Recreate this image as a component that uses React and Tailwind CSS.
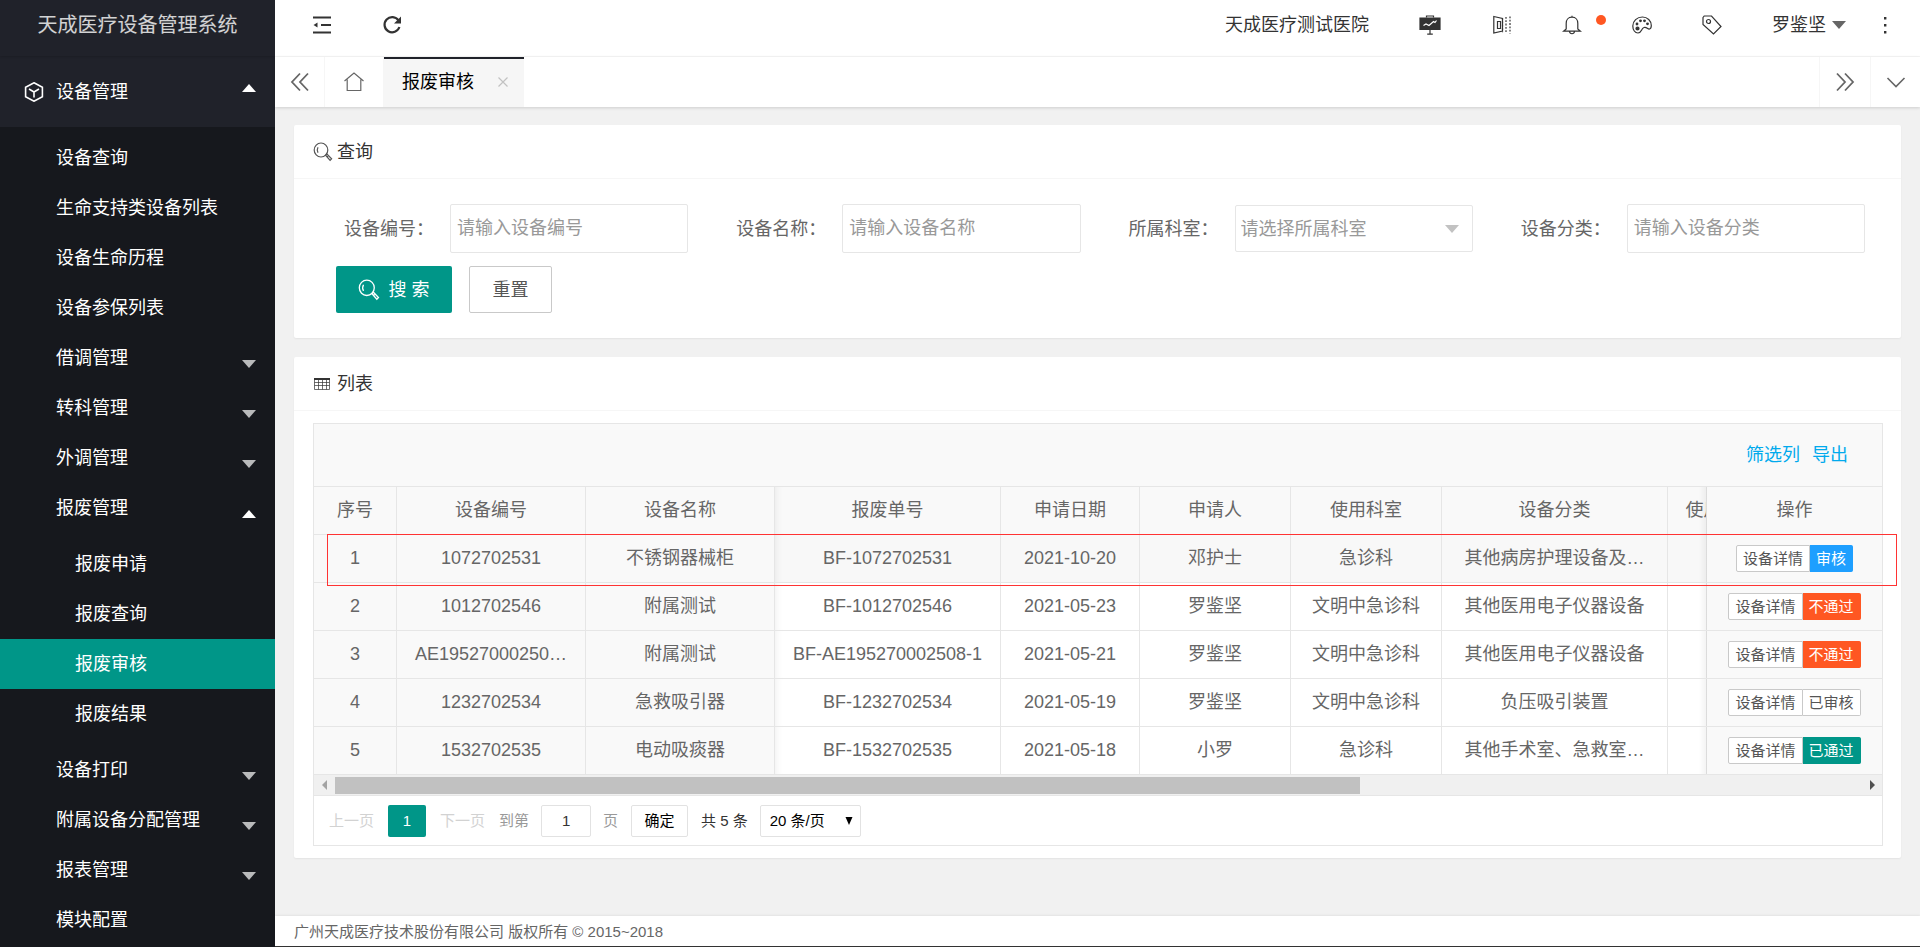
import React, { useState } from "react";

const menu = [
  { name: "设备查询" },
  { name: "生命支持类设备列表" },
  { name: "设备生命历程" },
  { name: "设备参保列表" },
  { name: "借调管理", more: true },
  { name: "转科管理", more: true },
  { name: "外调管理", more: true },
  {
    name: "报废管理",
    more: true,
    children: ["报废申请", "报废查询", "报废审核", "报废结果"],
  },
  { name: "设备打印", more: true },
  { name: "附属设备分配管理", more: true },
  { name: "报表管理", more: true },
  { name: "模块配置" },
];

const columns = [
  { title: "序号", width: "w-[83px]" },
  { title: "设备编号", width: "w-[189px]" },
  { title: "设备名称", width: "w-[189px]" },
  { title: "报废单号", width: "w-[226px]" },
  { title: "申请日期", width: "w-[139px]" },
  { title: "申请人", width: "w-[151px]" },
  { title: "使用科室", width: "w-[151px]" },
  { title: "设备分类", width: "w-[226px]" },
  { title: "使用状态", width: "w-[108px]" },
];

const rows = [
  {
    cells: ["1", "1072702531", "不锈钢器械柜", "BF-1072702531", "2021-10-20", "邓护士", "急诊科", "其他病房护理设备及…", ""],
    action: "审核",
    color: "border-[#1e9fff] bg-[#1e9fff] text-white",
  },
  {
    cells: ["2", "1012702546", "附属测试", "BF-1012702546", "2021-05-23", "罗鉴坚", "文明中急诊科", "其他医用电子仪器设备", ""],
    action: "不通过",
    color: "border-[#ff5722] bg-[#ff5722] text-white",
  },
  {
    cells: ["3", "AE19527000250…", "附属测试", "BF-AE195270002508-1", "2021-05-21", "罗鉴坚", "文明中急诊科", "其他医用电子仪器设备", ""],
    action: "不通过",
    color: "border-[#ff5722] bg-[#ff5722] text-white",
  },
  {
    cells: ["4", "1232702534", "急救吸引器", "BF-1232702534", "2021-05-19", "罗鉴坚", "文明中急诊科", "负压吸引装置", ""],
    action: "已审核",
    color: "border-[#c9c9c9] bg-white text-[#555]",
  },
  {
    cells: ["5", "1532702535", "电动吸痰器", "BF-1532702535", "2021-05-18", "小罗", "急诊科", "其他手术室、急救室…", ""],
    action: "已通过",
    color: "border-[#009688] bg-[#009688] text-white",
  },
];

const Icon = ({ children, className = "size-5", viewBox = "0 0 20 20" }) => (
  <svg
    viewBox={viewBox}
    className={className}
    fill="none"
    stroke="currentColor"
    strokeWidth="1.2"
    aria-hidden="true"
  >
    {children}
  </svg>
);

const Caret = ({ up, className = "" }) => (
  <svg viewBox="0 0 14 8" className={`h-2 w-3.5 ${className}`} fill="currentColor" aria-hidden="true">
    <path d={up ? "M7 0l7 8H0z" : "M0 0h14L7 8z"} />
  </svg>
);

const SearchIcon = ({ className }) => (
  <Icon className={className}>
    <ellipse cx="8" cy="8" rx="6.8" ry="7" />
    <path d="M5 5.2C4 7 4 9 5 10.8M12.6 13.2l1.4-1.2 4.6 4.8-1.5 1.6zM14 15l1-.9" />
  </Icon>
);

const Sidebar = () => (
  <aside className="w-[275px] shrink-0 overflow-hidden bg-[#16181d] text-white">
    <div className="bg-[#20222a]">
      <div className="flex h-14 items-center justify-center pb-1.5 text-xl text-white/80 shadow-[0_1px_2px_rgba(0,0,0,0.15)]">
        天成医疗设备管理系统
      </div>
      <a href="#" className="flex h-[71px] items-center pr-[19px] pl-6 text-lg">
        <Icon className="mr-3 size-5">
          <path strokeWidth="1.6" d="M10 .8l8.4 4.4v9.6L10 19.2l-8.4-4.4V5.2zM5 7l5 3 5-3M10 10v5.5" />
        </Icon>
        <span className="grow">设备管理</span>
        <Caret up className="mb-2" />
      </a>
    </div>
    <nav className="pt-1.5 text-lg">
      {menu.map((item) => (
        <div key={item.name}>
          <a href="#" className="flex h-[50px] items-center pr-[19px] pl-14">
            <span className="grow">{item.name}</span>
            {item.more && (
              <Caret
                up={Boolean(item.children)}
                className={item.children ? "mt-3" : "mt-3 text-white/70"}
              />
            )}
          </a>
          {item.children && (
            <div className="py-1.5">
              {item.children.map((child) => (
                <a
                  key={child}
                  href="#"
                  className={`flex h-[50px] items-center pl-[75px] ${
                    child === "报废审核" ? "bg-[#009688]" : ""
                  }`}
                >
                  {child}
                </a>
              ))}
            </div>
          )}
        </div>
      ))}
    </nav>
  </aside>
);

const Header = () => (
  <header className="flex h-[57px] items-center border-b border-[#f6f6f6] bg-white pb-1.5 text-[#333]">
    <button aria-label="收起菜单" className="ml-[37px]">
      <Icon>
        <path strokeWidth="2" d="M1 2.5h18M9 10h10M1 17.5h18" />
        <path d="M1.5 10L5.5 7.5v5z" fill="currentColor" stroke="none" />
      </Icon>
    </button>
    <button aria-label="刷新" className="ml-[50px]">
      <Icon>
        <path strokeWidth="2.2" d="M16.5 5.5A7.6 7.6 0 1 0 17.4 12" />
        <path d="M19 1.5v7h-7z" fill="currentColor" stroke="none" />
      </Icon>
    </button>
    <span className="grow text-right text-lg">天成医疗测试医院</span>
    <button aria-label="工作台" className="ml-[50px]">
      <Icon className="size-[22px]" viewBox="0 0 22 22">
        <path d="M7.5 3.5V2h7v1.5M11 16v4.5M8.2 20.2h5.6" />
        <path d="M1 4h20v11.5H1z" fill="currentColor" />
        <path stroke="#fff" d="M4.5 11.5l2.5-1.5 3 1.5 4.5-4 1.5 1 1.5-2" />
      </Icon>
    </button>
    <button aria-label="便签" className="ml-[51px]">
      <Icon>
        <path d="M1.8 1.5l8.7 2v12.500l-8.7 2zM5.5 6.5h3v7h-3z" />
        <path strokeDasharray="1.8 1.5" d="M10.5 3.2v14M14 2v16M18 1.5v17" />
      </Icon>
    </button>
    <button aria-label="消息" className="relative ml-[50px]">
      <Icon>
        <path d="M10 2.2c-4 0-5.8 3-5.8 6V14L1.5 16.2h17L15.8 14V8.2c0-3-1.8-6-5.8-6zM10 .8v1.4M7.5 16.5c.4 3 4.6 3 5 0" />
      </Icon>
      <span className="absolute top-0 -right-6 size-2.5 rounded-full bg-[#ff5722]" />
    </button>
    <button aria-label="主题" className="ml-[50px]">
      <Icon>
        <path d="M10.5 2C5 2 .8 6 .8 11c0 4 2.2 7 5.2 7 3.800 0 3-4.500 6-5.500 2.700-.9 3.600 2 5.600 1.500 1.300-.4 1.700-1.500 1.700-3.500 0-4.800-3.900-8.500-8.800-8.500z" />
        <circle cx="5" cy="9" r=".8" fill="currentColor" />
        <circle cx="8.5" cy="5.8" r=".8" fill="currentColor" />
        <circle cx="12.5" cy="5.8" r=".8" fill="currentColor" />
        <circle cx="15.5" cy="8.8" r=".8" fill="currentColor" />
        <circle cx="5.5" cy="13.5" r="1.5" fill="currentColor" />
      </Icon>
    </button>
    <button aria-label="标签" className="ml-[50px]">
      <Icon>
        <path d="M1 2.5l1.2-1.5h7.3l9.5 10.5-7.5 7.5L1 9.5z" />
        <circle cx="6.5" cy="6.5" r="2" />
      </Icon>
    </button>
    <button className="ml-[50px] flex items-center gap-1.5 text-lg">
      罗鉴坚
      <Caret className="text-[#666]" />
    </button>
    <button aria-label="更多" className="mr-[25px] ml-[29px]">
      <Icon>
        <path fill="currentColor" stroke="none" d="M9 2h2.4v2.4H9zM9 9h2.4v2.4H9zM9 16h2.4v2.4H9z" />
      </Icon>
    </button>
  </header>
);

const TabBar = () => (
  <div className="relative flex h-[50px] bg-white text-[#666] shadow-[0_1px_3px_rgba(0,0,0,0.15)]">
    <button aria-label="向左" className="flex w-[50px] items-center justify-center border-r border-[#f6f6f6]">
      <Icon>
        <path strokeWidth="1.8" d="M10 1.5L2 10l8 8.5M18 1.5L10 10l8 8.5" />
      </Icon>
    </button>
    <a href="#" aria-label="首页" className="flex w-[59px] items-center justify-center border-r border-[#f6f6f6]">
      <Icon>
        <path d="M.5 9L10 1l9.5 8M3.2 7.5V18.5h13.6V7.5" />
      </Icon>
    </a>
    <div className="flex w-[140px] items-center border-t-2 border-[#20222a] bg-[#f6f6f6] pr-4 pb-0.5 pl-[18px]">
      <a href="#" className="grow text-lg text-black">
        报废审核
      </a>
      <button aria-label="关闭" className="text-[#c2c2c2]">
        <Icon className="size-2.5" viewBox="0 0 10 10">
          <path d="M.5.5l9 9M9.5.5l-9 9" />
        </Icon>
      </button>
    </div>
    <div className="grow" />
    <button aria-label="向右" className="flex w-[51px] items-center justify-center border-l border-[#f6f6f6]">
      <Icon>
        <path strokeWidth="1.8" d="M2 1.5l8 8.5-8 8.5M10 1.5l8 8.5-8 8.5" />
      </Icon>
    </button>
    <button aria-label="标签操作" className="flex w-[50px] items-center justify-center border-l border-[#f6f6f6]">
      <Icon>
        <path strokeWidth="1.6" d="M1.500 6L10 14.500 18.500 6" />
      </Icon>
    </button>
  </div>
);

const Field = ({ id, label, children }) => (
  <div className="flex grow basis-0 items-center pr-[17px]">
    <label htmlFor={id} className="w-[137px] shrink-0 pr-4 text-right text-[#666]">
      {label}{"\uff1a"}
    </label>
    {children}
  </div>
);

const inputClass =
  "h-[49px] w-full min-w-0 rounded-xs border border-[#e6e6e6] bg-white px-1.5 text-[#666] outline-none placeholder:text-[#999]";

const SearchCard = () => {
  const [form, setForm] = useState({ code: "", name: "", type: "" });
  const change = (e) => setForm({ ...form, [e.target.name]: e.target.value });

  return (
    <section className="rounded-xs bg-white shadow-[0_1px_2px_rgba(0,0,0,0.06)]">
      <h2 className="flex h-[54px] items-center gap-1 border-b border-[#f6f6f6] px-[19px] text-lg text-[#333]">
        <SearchIcon className="size-5 text-[#555]" />
        查询
      </h2>
      <form className="px-[19px] py-[25px] text-lg" onSubmit={(e) => e.preventDefault()}>
        <div className="flex">
          <Field id="code" label="设备编号">
            <input id="code" name="code" value={form.code} onChange={change} placeholder="请输入设备编号" className={inputClass} />
          </Field>
          <Field id="name" label="设备名称">
            <input id="name" name="name" value={form.name} onChange={change} placeholder="请输入设备名称" className={inputClass} />
          </Field>
          <Field id="dept" label="所属科室">
            <div className="relative w-full">
              <select
                id="dept"
                className="h-[47px] w-full appearance-none rounded-xs border border-[#e6e6e6] bg-white px-[5px] text-[#999] outline-none"
              >
                <option>请选择所属科室</option>
              </select>
              <Caret className="pointer-events-none absolute top-5 right-3.5 text-[#c2c2c2]" />
            </div>
          </Field>
          <Field id="type" label="设备分类">
            <input id="type" name="type" value={form.type} onChange={change} placeholder="请输入设备分类" className={inputClass} />
          </Field>
        </div>
        <div className="mt-[13px] flex gap-[17px] pl-[23px]">
          <button className="flex h-[47px] w-[116px] items-center justify-center gap-2 rounded-xs bg-[#009688] text-white">
            <SearchIcon className="size-[22px]" />
            搜 索
          </button>
          <button type="reset" className="h-[47px] w-[83px] rounded-xs border border-[#c9c9c9] bg-white text-[#555]">
            重置
          </button>
        </div>
      </form>
    </section>
  );
};

const DataTable = () => (
  <div className="overflow-hidden">
    <table className="w-[1638px] table-fixed border-separate border-spacing-0 text-center text-[#666]">
      <thead>
        <tr className="bg-[#f9f9f9]">
          {columns.map((col, i) => (
            <th
              key={col.title}
              className={`h-12 border-r border-b border-[#e6e6e6] pb-0.5 font-normal ${col.width} ${
                i === 3 ? "shadow-[inset_8px_0_8px_-8px_rgba(0,0,0,0.08)]" : ""
              }`}
            >
              {col.title}
            </th>
          ))}
          <th className="sticky right-0 h-12 w-[176px] border-b border-l border-[#e6e6e6] bg-[#f9f9f9] pb-0.5 font-normal before:absolute before:inset-y-0 before:-left-2 before:w-2 before:bg-linear-to-l before:from-black/5">
            操作
          </th>
        </tr>
      </thead>
      <tbody>
        {rows.map((row, index) => (
          <tr key={row.cells[0]} className={index === 0 ? "bg-[#f8f8f8]" : "bg-white"}>
            {row.cells.map((cell, i) => (
              <td
                key={i}
                className={`h-12 border-r border-b border-[#e6e6e6] pb-0.5 whitespace-nowrap ${i < 3 ? "bg-[#f9f9f9]" : ""} ${
                  i === 3 ? "shadow-[inset_8px_0_8px_-8px_rgba(0,0,0,0.08)]" : ""
                }`}
              >
                {cell}
              </td>
            ))}
            <td className="sticky right-0 h-12 border-b border-l border-[#e6e6e6] bg-[#f9f9f9] before:absolute before:inset-y-0 before:-left-2 before:w-2 before:bg-linear-to-l before:from-black/5">
              <div className="flex justify-center text-[15px] leading-[25px]">
                <button className="rounded-l-xs border border-[#c9c9c9] bg-white px-1.5 text-[#555]">设备详情</button>
                <button className={`rounded-r-xs border border-l-0 px-1.5 ${row.color}`}>{row.action}</button>
              </div>
            </td>
          </tr>
        ))}
      </tbody>
    </table>
  </div>
);

const Pager = () => (
  <div className="flex h-[49px] items-center pl-[15px] text-[15px] text-[#999]">
    <a href="#" className="text-[#d2d2d2]">上一页</a>
    <a href="#" className="mx-3.5 h-8 w-[38px] rounded-xs bg-[#009688] text-center leading-8 text-white">1</a>
    <a href="#" className="text-[#d2d2d2]">下一页</a>
    <label htmlFor="page" className="ml-3.5">到第</label>
    <input
      id="page"
      defaultValue="1"
      className="mx-3 h-8 w-[50px] rounded-xs border border-[#e2e2e2] bg-white text-center text-[#333] outline-none"
    />
    <span>页</span>
    <button className="mx-[13px] h-8 w-[57px] rounded-xs border border-[#e2e2e2] bg-white text-black">确定</button>
    <span className="text-[#333]">共 5 条</span>
    <div className="relative ml-3">
      <select
        aria-label="每页条数"
        className="h-8 w-[101px] appearance-none rounded-xs border border-[#e2e2e2] bg-white px-[9px] text-black outline-none"
      >
        <option>20 条/页</option>
      </select>
      <svg viewBox="0 0 8 8" className="pointer-events-none absolute top-3 right-2 size-2" aria-hidden="true">
        <path d="M.5 0h7L4 8z" />
      </svg>
    </div>
  </div>
);

const ListCard = () => (
  <section className="relative rounded-xs bg-white pb-3 shadow-[0_1px_2px_rgba(0,0,0,0.06)]">
    <h2 className="flex h-[54px] items-center gap-[7px] border-b border-[#f6f6f6] px-5 text-lg text-[#333]">
      <Icon className="size-4" viewBox="0 0 16 16">
        <path strokeWidth="1" opacity=".7" d="M.5 3v10.500h15V3M.5 6.500h15M.5 9.500h15M4.500 3v10.500M8.500 3v10.500M12.500 3v10.500" />
        <path strokeWidth="2" d="M0 3h16" />
      </Icon>
      列表
    </h2>
    <div className="mt-3 mr-[18px] ml-[19px] border border-[#e6e6e6] text-lg">
      <div className="flex h-[63px] items-center justify-end gap-3 border-b border-[#e6e6e6] bg-[#f9f9f9] pr-[34px] text-[#01aaed]">
        <a href="#">筛选列</a>
        <a href="#">导出</a>
      </div>
      <DataTable />
      <div className="flex h-[21px] items-center border-b border-[#e6e6e6] bg-[#f0f0f0]">
        <svg viewBox="0 0 21 10" className="h-2.5 w-[21px]" aria-hidden="true">
          <path d="M13 0v10L8 5z" fill="#a3a3a3" />
        </svg>
        <div className="grow">
          <div className="h-[17px] w-[67.2%] bg-[#c1c1c1]" />
        </div>
        <svg viewBox="0 0 21 10" className="h-2.5 w-[21px]" aria-hidden="true">
          <path d="M9 0v10l5-5z" fill="#505050" />
        </svg>
      </div>
      <Pager />
    </div>
    {/* outlines the record waiting for review */}
    <div className="pointer-events-none absolute top-[177px] right-1 left-[33px] h-[52px] border border-[#ff3333]" />
  </section>
);

const App = () => (
  <div className="flex h-screen overflow-hidden bg-[#f1f1f1] font-['Liberation_Sans','Noto_Sans_CJK_SC',sans-serif]">
    <Sidebar />
    <div className="flex min-w-0 grow flex-col">
      <Header />
      <TabBar />
      <main className="flex grow flex-col gap-[19px] overflow-hidden px-[19px] pt-[18px]">
        <SearchCard />
        <ListCard />
      </main>
      <footer className="h-[31px] border-b border-[#333] bg-white px-[19px] text-[15px] leading-8 text-[#666] shadow-[0_-1px_2px_rgba(0,0,0,0.06)]">
        广州天成医疗技术股份有限公司 版权所有 © 2015~2018
      </footer>
    </div>
  </div>
);

export default App;
